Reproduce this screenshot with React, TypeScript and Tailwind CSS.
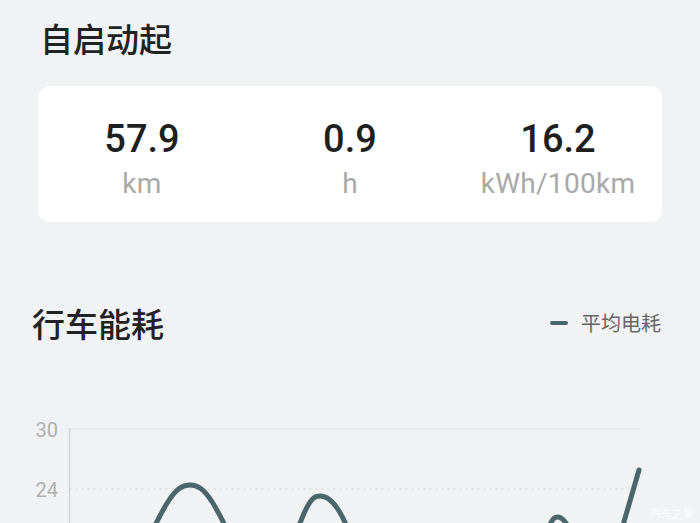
const stats = [
  { value: "57.9", unit: "km" },
  { value: "0.9", unit: "h" },
  { value: "16.2", unit: "kWh/100km" },
];

// chart is drawn in page coordinates, svg starts at y=343
const curve =
  "M 130 580 C 165 500, 175 485, 190 485 C 205 485, 215 500, 250 580 " +
  "L 265 600 L 280 580 C 305 505, 310 496, 320 496 C 332 496, 345 510, 365 580 " +
  "L 450 600 L 530 580 C 550 520, 552 517, 558 517 C 565 517, 572 530, 585 570 " +
  "L 600 600 L 610 570 L 639 470";

function EnergyChart() {
  return (
    <svg
      width={700}
      height={180}
      viewBox="0 343 700 180"
      className="block"
      style={{ overflow: "hidden" }}
    >
      <text x={58} y={437} textAnchor="end" fontSize={20} fill="#b0b0b0" fontFamily="Roboto, sans-serif">
        30
      </text>
      <text x={58} y={497} textAnchor="end" fontSize={20} fill="#b0b0b0" fontFamily="Roboto, sans-serif">
        24
      </text>
      <line x1={69} y1={429} x2={640} y2={429} stroke="#e3e4e6" strokeWidth={1} />
      <line x1={69} y1={489} x2={630} y2={489} stroke="#dcdde0" strokeWidth={1} strokeDasharray="3 3" />
      <line x1={69.5} y1={428} x2={69.5} y2={530} stroke="#d2d3d6" strokeWidth={1.5} />
      <path d={curve} fill="none" stroke="#4b666a" strokeWidth={5} strokeLinecap="round" strokeLinejoin="round" />
      <text x={650} y={518} fontSize={11} fill="#ffffff" fillOpacity={0.85} fontFamily="'Noto Sans CJK SC', sans-serif">
        汽车之家
      </text>
    </svg>
  );
}

export default function App() {
  return (
    <div
      className="w-[700px] h-[523px] overflow-hidden bg-[#f1f2f4] text-[#222222]"
      style={{ fontFamily: "Roboto, 'Noto Sans CJK SC', sans-serif" }}
    >
      <div className="px-[40px] pt-[18px] text-[33px] leading-[40px] font-medium font-['Noto_Sans_CJK_SC',sans-serif]">
        自启动起
      </div>

      <div className="mx-[38px] mt-[28px] h-[136px] rounded-xl bg-white grid grid-cols-3">
        {stats.map((s) => (
          <div key={s.unit} className="flex flex-col items-center pt-[31px]">
            <div className="text-[38px] leading-[44px] font-medium text-[#1f1f1f]">{s.value}</div>
            <div className="mt-[7px] text-[28px] leading-[32px] tracking-[0.3px] text-[#a9a9a9]">{s.unit}</div>
          </div>
        ))}
      </div>

      <div className="mt-[81px] flex items-center justify-between pl-[32px] pr-[39px]">
        <div className="text-[33px] leading-[40px] font-medium font-['Noto_Sans_CJK_SC',sans-serif]">
          行车能耗
        </div>
        <div className="flex items-center gap-[13px]">
          <span className="block w-[18px] h-[4px] rounded-full bg-[#4b666a]" />
          <span className="text-[20px] leading-[24px] text-[#666666] font-['Noto_Sans_CJK_SC',sans-serif]">
            平均电耗
          </span>
        </div>
      </div>

      <EnergyChart />
    </div>
  );
}
